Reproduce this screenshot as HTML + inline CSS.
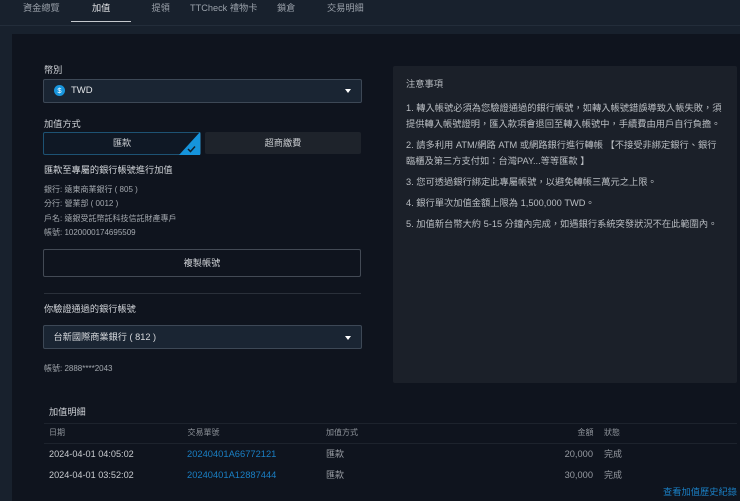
<!DOCTYPE html>
<html lang="zh-Hant"><head><meta charset="utf-8"><style>
html,body{margin:0;padding:0}
body{width:740px;height:501px;overflow:hidden;position:relative;background:#18212d;font-family:"Liberation Sans","Noto Sans CJK TC",sans-serif;font-size:9.2px;color:#d0d3d8}
div,a,svg{position:absolute}
.t{white-space:nowrap;line-height:12px}
.tab{top:2px;color:#9aa1aa;font-size:9.2px}
.lbl{color:#d0d3d8;font-size:9.2px}
.sm{color:#a3a8ae;font-size:8px}
.sel{left:43px;width:317px;height:22px;background:#1a2533;border:1px solid #3d4856;border-radius:2px}
.car{width:0;height:0;border-left:3.5px solid transparent;border-right:3.5px solid transparent;border-top:4px solid #fff}
.n{left:406px;color:#babec3;font-size:9.25px;white-space:nowrap;line-height:12px}
.h{color:#8f949b;font-size:8px;top:427px}
.c{color:#c9ccd0;font-size:9.15px}
.g{color:#979ba2;font-size:9px}
.b{color:#1a7fc4;font-size:9.35px}
</style></head><body>
<div class="t tab" style="left:23px">資金總覽</div>
<div class="t tab" style="left:92px;color:#e4e6e9">加值</div>
<div class="t tab" style="left:151.5px">提領</div>
<div class="t tab" style="left:190px">TTCheck 禮物卡</div>
<div class="t tab" style="left:277px">鎖倉</div>
<div class="t tab" style="left:327px">交易明細</div>
<div style="left:71px;top:21px;width:60px;height:1px;background:#c5c9ce"></div>
<div style="left:0;top:25px;width:740px;height:1px;background:#232d3a"></div>
<div style="left:12px;top:34px;width:728px;height:467px;background:#0f141e"></div>

<div class="t lbl" style="left:44px;top:64px">幣別</div>
<div class="sel" style="top:79px"></div>
<div style="left:54px;top:85px;width:11px;height:11px;border-radius:50%;background:#1896de;color:#fff;font-size:7.5px;line-height:11px;text-align:center">$</div>
<div class="t" style="left:71px;top:85px;color:#e3e5e8;font-size:9.5px">TWD</div>
<div class="car" style="left:345px;top:89px"></div>

<div class="t lbl" style="left:44px;top:118px">加值方式</div>
<div style="left:43px;top:132px;width:156px;height:21px;background:#0f1825;border:1px solid #1d5273;border-radius:2px"></div>
<svg style="left:179px;top:132px" width="21" height="23" viewBox="0 0 21 23"><path d="M21 0V23H0Z" fill="#1594dc"/><path d="M9 17l2.500 2.500 4.500-5" fill="none" stroke="#10202e" stroke-width="1.500"/></svg>
<div class="t" style="left:43px;top:137px;width:158px;text-align:center;color:#c6c9cd">匯款</div>
<div style="left:205px;top:132px;width:156px;height:22px;background:#1e232b;border-radius:2px"></div>
<div class="t" style="left:205px;top:137px;width:156px;text-align:center;color:#c6c9cd">超商繳費</div>

<div class="t lbl" style="left:44px;top:164px;color:#d3d6da">匯款至專屬的銀行帳號進行加值</div>
<div class="t sm" style="left:44px;top:184px">銀行: 遠東商業銀行 ( 805 )</div>
<div class="t sm" style="left:44px;top:198px">分行: 營業部 ( 0012 )</div>
<div class="t sm" style="left:44px;top:213px">戶名: 遠銀受託幣託科技信託財產專戶</div>
<div class="t sm" style="left:44px;top:227px">帳號: 1020000174695509</div>
<div style="left:43px;top:249px;width:316px;height:26px;border:1px solid #434a55;border-radius:2px"></div>
<div class="t" style="left:43px;top:257px;width:318px;text-align:center;color:#d0d3d7">複製帳號</div>
<div style="left:44px;top:293px;width:317px;height:1px;background:#2a303a"></div>
<div class="t lbl" style="left:44px;top:303px">你驗證通過的銀行帳號</div>
<div class="sel" style="top:325px"></div>
<div class="t" style="left:53.5px;top:331px;color:#d8dade;font-size:9.2px">台新國際商業銀行 ( 812 )</div>
<div class="car" style="left:345px;top:336px"></div>
<div class="t sm" style="left:44px;top:363px">帳號: 2888****2043</div>

<div style="left:393px;top:66px;width:344px;height:317px;background:#1b2029;border-radius:2px"></div>
<div class="n" style="top:78px">注意事項</div>
<div class="n" style="top:102px">1. 轉入帳號必須為您驗證通過的銀行帳號，如轉入帳號錯誤導致入帳失敗，須</div>
<div class="n" style="top:118px">提供轉入帳號證明，匯入款項會退回至轉入帳號中，手續費由用戶自行負擔。</div>
<div class="n" style="top:139px">2. 請多利用 ATM/網路 ATM 或網路銀行進行轉帳 【不接受非綁定銀行、銀行</div>
<div class="n" style="top:155px">臨櫃及第三方支付如：台灣PAY...等等匯款 】</div>
<div class="n" style="top:176px">3. 您可透過銀行綁定此專屬帳號，以避免轉帳三萬元之上限。</div>
<div class="n" style="top:197px">4. 銀行單次加值金額上限為 1,500,000 TWD。</div>
<div class="n" style="top:218px">5. 加值新台幣大約 5-15 分鐘內完成，如遇銀行系統突發狀況不在此範圍內。</div>

<div class="t lbl" style="left:49px;top:406px">加值明細</div>
<div style="left:44px;top:423px;width:693px;height:1px;background:#1d232d"></div>
<div style="left:44px;top:443px;width:693px;height:1px;background:#1d232d"></div>
<div class="t h" style="left:49px">日期</div>
<div class="t h" style="left:187.500px">交易單號</div>
<div class="t h" style="left:326px">加值方式</div>
<div class="t h" style="left:577.500px">金額</div>
<div class="t h" style="left:604px">狀態</div>
<div class="t c" style="left:49px;top:448px">2024-04-01 04:05:02</div>
<div class="t b" style="left:187px;top:448px">20240401A66772121</div>
<div class="t g" style="left:326px;top:448px">匯款</div>
<div class="t g" style="right:147px;top:448px;font-size:9.3px">20,000</div>
<div class="t g" style="left:604px;top:448px">完成</div>
<div class="t c" style="left:49px;top:469px">2024-04-01 03:52:02</div>
<div class="t b" style="left:187px;top:469px">20240401A12887444</div>
<div class="t g" style="left:326px;top:469px">匯款</div>
<div class="t g" style="right:147px;top:469px;font-size:9.3px">30,000</div>
<div class="t g" style="left:604px;top:469px">完成</div>
<div class="t b" style="left:663px;top:486px;font-size:9.25px">查看加值歷史紀錄</div>
</body></html>
